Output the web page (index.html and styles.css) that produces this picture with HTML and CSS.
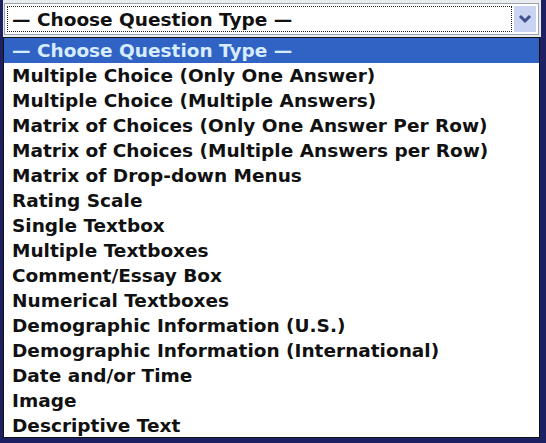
FILE: index.html
```html
<!DOCTYPE html>
<html lang="en">
<head>
  <meta charset="UTF-8">
  <title>Choose Question Type</title>
  <link rel="stylesheet" href="styles.css">
</head>
<body>
  <div class="frame">
    <div class="select">
      <div class="select-value">&mdash; Choose Question Type &mdash;</div>
      <div class="select-arrow">
        <svg width="14" height="10" viewBox="0 0 14 10">
          <path d="M2 2 L7 7 L12 2" fill="none" stroke="#3d4f8c" stroke-width="3"/>
        </svg>
      </div>
    </div>
  </div>
  <ul class="options">
    <li class="selected">&mdash; Choose Question Type &mdash;</li>
    <li>Multiple Choice (Only One Answer)</li>
    <li>Multiple Choice (Multiple Answers)</li>
    <li>Matrix of Choices (Only One Answer Per Row)</li>
    <li>Matrix of Choices (Multiple Answers per Row)</li>
    <li>Matrix of Drop-down Menus</li>
    <li>Rating Scale</li>
    <li>Single Textbox</li>
    <li>Multiple Textboxes</li>
    <li>Comment/Essay Box</li>
    <li>Numerical Textboxes</li>
    <li>Demographic Information (U.S.)</li>
    <li>Demographic Information (International)</li>
    <li>Date and/or Time</li>
    <li>Image</li>
    <li>Descriptive Text</li>
  </ul>
</body>
</html>
```

FILE: styles.css
```css
* {
  margin: 0;
  padding: 0;
  box-sizing: border-box;
}
body {
  width: 546px;
  height: 443px;
  overflow: hidden;
  background: #1d2163;
  font-family: "DejaVu Sans", Verdana, sans-serif;
  font-weight: bold;
  font-size: 18.5px;
  color: #111;
}
.frame {
  margin-left: 3px;
  width: 538px;
  height: 37px;
  padding: 3px 0 2px 1px;
  background: #e9ecef;
}
.select {
  display: flex;
  align-items: stretch;
  width: 535px;
  height: 32px;
  border: 1px solid #9ba4ae;
  background: #fff;
  padding: 2px;
}
.select-value {
  flex: 1;
  border: 1px dotted #222;
  padding-left: 4px;
  line-height: 25px;
}
.select-arrow {
  width: 22px;
  margin-left: 2px;
  background: #c8d4f2;
  display: flex;
  align-items: center;
  justify-content: center;
}
.options {
  list-style: none;
  margin-left: 3px;
  width: 537px;
  height: 401px;
  border: 1px solid #111;
  background: #fff;
}
.options li {
  height: 25px;
  line-height: 25px;
  padding-left: 8px;
  white-space: nowrap;
}
.options .selected {
  background: #3163c4;
  color: #d6ecff;
}
```
